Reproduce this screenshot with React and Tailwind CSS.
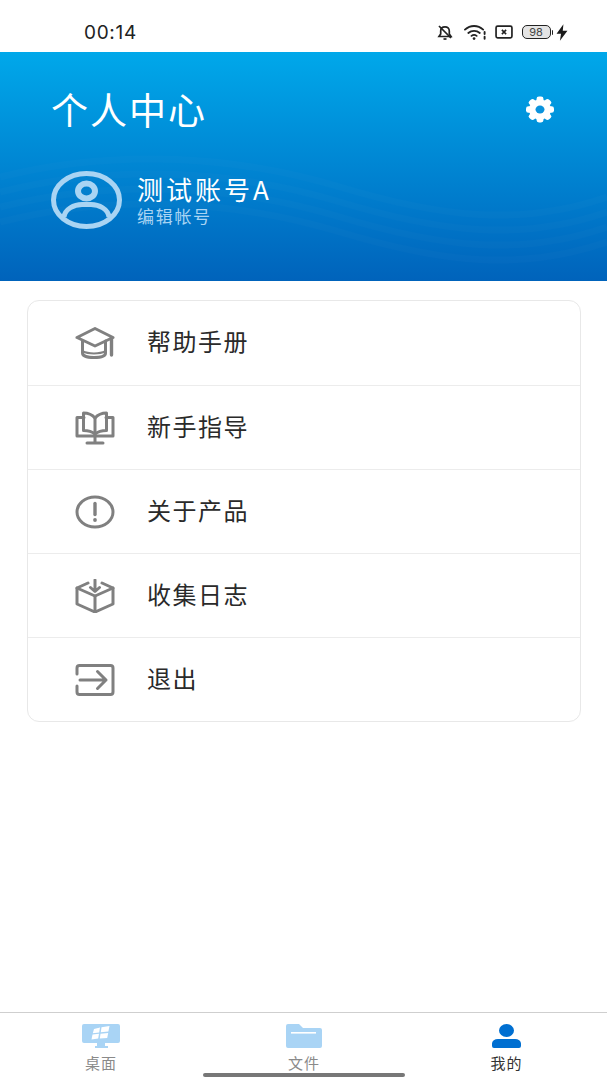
import React from "react";

const font = { fontFamily: '"Noto Sans CJK SC", "Noto Sans", sans-serif' };

const stroke = { fill: "none", stroke: "#808080", strokeWidth: 3, strokeLinecap: "round", strokeLinejoin: "round" };

const Cap = () => (
  <svg width="40" height="32" viewBox="0 0 40 32" {...stroke}>
    <path d="M20 1.5 L38 10.5 L20 19 L2 10.5 Z" />
    <path d="M7.5 14 V26 C7.5 29 13 30.5 19 30.5 C26 30.5 30.5 29 30.5 26 V14" />
    <path d="M8 24.5 C13 27 25 27 30 24.5" strokeWidth="2" />
    <path d="M36.5 11 V28" strokeWidth="3.4" />
  </svg>
);
const Book = () => (
  <svg width="40" height="34" viewBox="0 0 40 34" {...stroke}>
    <path d="M9 6.5 H2 V25 H38 V6.5 H31" />
    <path d="M20 7 C17 3.5 13 2 8.5 2 V19.5 C13 19.5 17 20.5 20 23 C23 20.5 27 19.5 31.5 19.5 V2 C27 2 23 3.5 20 7 Z" />
    <path d="M20 7 V22.5" />
    <path d="M20 25 V32 M12 32 H28" />
  </svg>
);
const Info = () => (
  <svg width="40" height="34" viewBox="0 0 40 34" {...stroke}>
    <ellipse cx="20" cy="17" rx="18" ry="15" />
    <path d="M20 8.5 V19.5" strokeWidth="3.4" />
    <circle cx="20" cy="25" r="1.9" fill="#808080" stroke="none" />
  </svg>
);
const Box = () => (
  <svg width="40" height="34" viewBox="0 0 40 34" {...stroke}>
    <path d="M13 4 L2 9 V25 L20 33 L38 25 V9 L27 4" />
    <path d="M2 9 L20 17 L38 9" />
    <path d="M20 17 V33" />
    <path d="M20 1 V12 M15.5 8.5 L20 12.5 L24.5 8.5" />
  </svg>
);
const Exit = () => (
  <svg width="40" height="32" viewBox="0 0 40 32" {...stroke}>
    <path d="M2 10 V4 C2 2.5 3 1.5 4.5 1.5 H35.5 C37 1.5 38 2.5 38 4 V28 C38 29.5 37 30.5 35.5 30.5 H4.5 C3 30.5 2 29.5 2 28 V22" />
    <path d="M5 16 H31 M22.5 7.5 L31 16 L22.5 24.5" />
  </svg>
);

const rows = [
  ["帮助手册", Cap],
  ["新手指导", Book],
  ["关于产品", Info],
  ["收集日志", Box],
  ["退出", Exit],
];

const StatusIcons = () => (
  <div className="flex items-center">
    <svg width="16" height="16" viewBox="0 0 16 16" fill="none" stroke="#222" strokeWidth="1.7" className="mr-[11px]">
      <path d="M2 12.5 H14 L12.3 10 V7 C12.3 4.5 10.5 2.8 8 2.8 C5.5 2.8 3.7 4.5 3.7 7 V10 Z" />
      <path d="M6.5 15 H9.5" />
      <path d="M2 2 L14 14" />
    </svg>
    <svg width="23" height="17" viewBox="0 0 24 17" fill="none" stroke="#222" strokeWidth="1.9" strokeLinecap="round" className="mr-[8px]">
      <path d="M1 5.5 C6.5 0.5 14.5 0.5 20 5.5" />
      <path d="M4.5 9 C8 6 13 6 16.5 9" />
      <path d="M7.8 12 C9.5 10.7 11.5 10.7 13.2 12" />
      <circle cx="10.5" cy="14.8" r="1.4" fill="#222" stroke="none" />
      <path d="M21.5 8 V10 M21.5 13 V15" strokeWidth="2" />
    </svg>
    <svg width="18" height="14" viewBox="0 0 17 13" fill="none" className="mr-[9px]">
      <rect x="1" y="1" width="15" height="11" rx="1.5" stroke="#222" strokeWidth="1.6" />
      <path d="M6.5 4.5 L10.5 8.5 M10.5 4.5 L6.5 8.5" stroke="#222" strokeWidth="1.5" />
    </svg>
    <div className="flex items-center">
      <div className="flex h-[14px] w-[29px] items-center justify-center rounded-[5px] border-[1.5px] border-[#222] bg-[#e4e4e4] text-[11px] leading-none text-[#444]" style={{ fontFamily: "Inter, sans-serif" }}>98</div>
      <div className="ml-px h-[5px] w-[1.5px] rounded-r-sm bg-[#222]" />
    </div>
    <svg width="12" height="17" viewBox="0 0 11 15" className="ml-[3px]">
      <path d="M6.8 0 L0.5 8.6 H4.6 L3.6 15 L10.5 5.8 H6.2 Z" fill="#1a1a1a" />
    </svg>
  </div>
);

const teeth = [0, 45, 90, 135, 180, 225, 270, 315];

export default function App() {
  return (
    <div className="relative flex h-[1080px] w-[607px] flex-col overflow-hidden bg-white" style={font}>
      <div className="flex h-[52px] shrink-0 items-center justify-between pl-[84px] pr-[39px] pt-[12px]">
        <span className="text-[19px] leading-none tracking-[0.7px] text-[#222]" style={{ fontFamily: "Inter, sans-serif" }}>00:14</span>
        <StatusIcons />
      </div>

      <div className="relative h-[229px] shrink-0 overflow-hidden bg-gradient-to-b from-[#00a8ea] to-[#0063bb]">
        <svg className="absolute inset-0" width="607" height="229" viewBox="0 0 607 229" fill="none" stroke="#ffffff" strokeOpacity="0.015" strokeWidth="7">
          <path d="M0 140 C120 110 240 120 340 150 S520 190 607 160" />
          <path d="M0 155 C120 125 240 135 340 165 S520 205 607 175" />
          <path d="M0 170 C120 140 240 150 340 180 S520 220 607 190" />
          <path d="M0 125 C120 95 240 105 340 135 S520 175 607 145" />
        </svg>
        <div className="relative flex flex-col pl-[51px] pr-[52px] pt-[36px]">
          <div className="flex h-[44px] items-center justify-between">
            <span className="mt-[-2px] text-[37px] leading-none tracking-[2px] text-white">个人中心</span>
            <svg width="30" height="27" viewBox="0 0 30 27" className="mt-[-2px]">
              <g fill="#fff">
                <ellipse cx="15" cy="13.5" rx="11" ry="10" />
                {teeth.map((a) => (
                  <rect key={a} x="11.5" y="0.5" width="7" height="7" rx="2.5" transform={`translate(15 13.5) scale(1 0.92) rotate(${a}) translate(-15 -14.5)`} />
                ))}
              </g>
              <ellipse cx="15" cy="13.5" rx="4.5" ry="4" fill="#0a93dd" />
            </svg>
          </div>
          <div className="mt-[39px] flex items-center">
            <svg width="71" height="58" viewBox="0 0 71 58" fill="none" stroke="#a9d4f3" strokeWidth="5">
              <ellipse cx="35.5" cy="29" rx="33" ry="26.5" />
              <ellipse cx="35.5" cy="20" rx="8.5" ry="7.5" strokeWidth="6" />
              <path d="M13 46 C14 38 23 33.5 31 33.5 H40 C48 33.5 57 38 58 46" />
            </svg>
            <div className="ml-[15px] flex flex-col gap-[2px]">
              <span className="text-[26px] leading-[30px] tracking-[3px] text-white">测试账号A</span>
              <span className="text-[17px] leading-[20px] tracking-[1.7px] text-[#a9d4f3]">编辑帐号</span>
            </div>
          </div>
        </div>
      </div>

      <div className="ml-[27px] mr-[26px] mt-[19px] rounded-[12px] border border-[#e8e8e8]">
        {rows.map(([label, Icon], i) => (
          <div key={label} className={`flex h-[84px] items-center ${i ? "border-t border-[#ececec]" : ""}`}>
            <div className="ml-[47px] flex w-[40px] justify-center"><Icon /></div>
            <span className="ml-[32px] mt-[-4px] text-[24px] leading-none tracking-[1.5px] text-[#2a2a2a]">{label}</span>
          </div>
        ))}
      </div>

      <div className="mt-auto flex h-[68px] border-t border-[#cfcfcf]">
        <div className="flex w-[202px] flex-col items-center pt-[11px]">
          <svg width="38" height="24" viewBox="0 0 38 24">
            <path fill="#a9d4f5" d="M2 0 H36 A2 2 0 0 1 38 2 V17 A2 2 0 0 1 36 19 H23 V22 H26 V24 H13 V22 H15 V19 H2 A2 2 0 0 1 0 17 V2 A2 2 0 0 1 2 0 Z" />
            <path fill="#fff" d="M12 5 L18 3.5 L17.2 8.5 L10.8 9.3 Z M19.5 3.2 L27.5 2 L26.4 7.6 L18.8 8.3 Z M10.5 10.5 L17 9.7 L16.2 14.5 L9.5 15.5 Z M18.5 9.7 L26.2 9 L25.2 14 L17.8 14.5 Z" />
          </svg>
          <span className="mt-[5px] text-[15px] leading-[20px] tracking-[1px] text-[#8a8a8a]">桌面</span>
        </div>
        <div className="flex w-[204px] flex-col items-center pt-[11px]">
          <svg width="36" height="24" viewBox="0 0 36 24">
            <path fill="#a9d4f5" d="M2 0 H13 L17 4 H34 A2 2 0 0 1 36 6 V22 A2 2 0 0 1 34 24 H2 A2 2 0 0 1 0 22 V2 A2 2 0 0 1 2 0 Z" />
            <rect x="5" y="8" width="25" height="1.6" fill="#fff" />
          </svg>
          <span className="mt-[5px] text-[15px] leading-[20px] tracking-[1px] text-[#8a8a8a]">文件</span>
        </div>
        <div className="flex w-[201px] flex-col items-center pt-[11px]">
          <svg width="29" height="24" viewBox="0 0 29 24">
            <ellipse cx="14.5" cy="6.5" rx="7.5" ry="6.5" fill="#006fd1" />
            <path fill="#006fd1" d="M6 15 H23 A6 4.5 0 0 1 29 19.5 V22 A2 2 0 0 1 27 24 H2 A2 2 0 0 1 0 22 V19.5 A6 4.5 0 0 1 6 15 Z" />
          </svg>
          <span className="mt-[5px] text-[15px] leading-[20px] tracking-[1px] text-[#333]">我的</span>
        </div>
      </div>
      <div className="absolute bottom-[3px] left-[203px] h-[4px] w-[202px] rounded-full bg-[#777]" />
    </div>
  );
}
